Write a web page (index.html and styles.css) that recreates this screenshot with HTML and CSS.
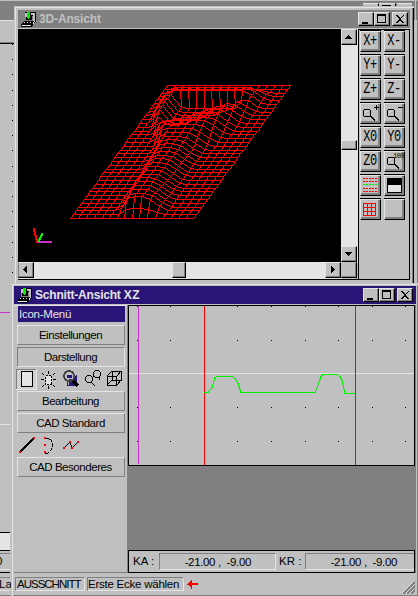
FILE: index.html
```html
<!DOCTYPE html>
<html lang="de">
<head>
<meta charset="utf-8">
<title>3D-Ansicht</title>
<link rel="stylesheet" href="styles.css">
</head>
<body>
<svg class="defs" width="0" height="0" aria-hidden="true">
  <defs>
    <g id="app">
      <path d="M5 1h11v9l-3 4-1 2H1v-3l4-4z" fill="#000"/>
      <path d="M5 2h10v8h-2V4h-2V2H7v4H5z" fill="#c0c0c0"/>
      <path d="M5 6h1v3h6V5h1v5H5z" fill="#808080"/>
      <path d="M7 1h3v6H9v1H8V7H7z" fill="#00f000"/>
      <path d="M2 14h9v1H2zM4 11h1v1H4zM7 11h1v1H7zM10 11h1v1h-1zM14 10h1v1h-1v2h-1v-2h1z" fill="#e4e4e4"/>
      <path d="M1 14h1v1H1z" fill="#f00"/>
    </g>
    <g id="lens" fill="none" stroke="#000">
      <circle cx="6" cy="9" r="4"/>
      <path d="M4 9l3-3" stroke="#e4e4e4"/>
      <path d="M9 11.500l5 5" stroke-width="1.600"/>
    </g>
    <g id="min"><path d="M3 9h6v2H3z"/></g>
    <g id="max"><path d="M2 1h9v9H2zM3 3v6h7V3z" fill-rule="evenodd"/></g>
    <g id="cls"><path d="M3 2h2v1h1v1h1v1h1V4h1V3h1V2h1v1h-1v1H9v1H8v2h1v1h1v1h1v1H9V9H8V8H6v1H5v1H3V9h1V8h1V7h1V5H5V4H4V3H3z"/></g>
  </defs>
</svg>

<div class="desktop">
  <div class="back">
    <div class="back-title"></div>
    <svg class="back-art" width="418" height="596" shape-rendering="crispEdges">
      <path d="M0 20.500h14" stroke="#e4e4e4"/>
      <path d="M0 43.500h14M0 532.500h10M0 550.500h10M0 572.500h10" stroke="#000"/>
      <path d="M0 42.500h14" stroke="#808080"/>
      <path d="M0 533h10v17H0z" fill="#e4e4e4"/>
      <path d="M0 553.500h10M0 577.500h10M0 595.500h12" stroke="#808080"/>
      <path d="M0 569.500h10M0 590.500h10M0 424.500h10" stroke="#e4e4e4"/>
      <path d="M0 312.500h10" stroke="#c832c8"/>
      <path d="M12.500 44v232" stroke="#000" stroke-dasharray="1 14.200"/>
      <path d="M363 3h15v4h-15zM379 3h16v4h-16zM397 3h15v4h-15z" fill="#c0c0c0"/>
      <path d="M363 3.500h14M379 3.500h15M397 3.500h15" stroke="#e4e4e4"/>
      <path d="M378.500 4v3M395.500 4v3M382 5.500h9" stroke="#000"/>
      <path d="M415.500 0v284" stroke="#c0c0c0"/>
      <path d="M417.500 0v284" stroke="#808080"/>
    </svg>
    <span class="back-num">0</span>
    <span class="back-lay">La</span>
  </div>

  <section class="win win3d">
    <header class="bar gray">
      <svg width="17" height="17" shape-rendering="crispEdges"><use href="#app"/></svg>
      <h1 class="t3d">3D-Ansicht</h1>
      <div class="caps">
        <button><svg width="13" height="12" shape-rendering="crispEdges"><use href="#min"/></svg></button>
        <button><svg width="13" height="12" shape-rendering="crispEdges"><use href="#max"/></svg></button>
        <button class="gap"><svg width="13" height="12" shape-rendering="crispEdges"><use href="#cls"/></svg></button>
      </div>
    </header>
    <div class="body3d">
      <div class="view">
        <canvas id="mesh" width="323" height="233"></canvas>
        <div class="vscroll">
          <i class="sb up"><svg width="13" height="13" shape-rendering="crispEdges"><path d="M6 5h1v1h1v1h1v1h1v1H3V8h1V7h1V6h1z"/></svg></i>
          <i class="sb vthumb"></i>
          <i class="sb down"><svg width="13" height="13" shape-rendering="crispEdges"><path d="M3 5h7v1H9v1H8v1H7v1H6V8H5V7H4V6H3z"/></svg></i>
        </div>
        <div class="hscroll">
          <i class="sb left"><svg width="13" height="13" shape-rendering="crispEdges"><path d="M8 3v7H7V9H6V8H5V7H4V6h1V5h1V4h1V3z"/></svg></i>
          <i class="sb hthumb"></i>
          <i class="sb right"><svg width="13" height="13" shape-rendering="crispEdges"><path d="M5 3h1v1h1v1h1v1h1v1H8v1H7v1H6v1H5z"/></svg></i>
        </div>
        <i class="sb corner"></i>
      </div>
      <div class="tools">
        <button><b>X+</b></button><button><b>X-</b></button>
        <button><b>Y+</b></button><button><b>Y-</b></button>
        <button><b>Z+</b></button><button><b>Z-</b></button>
        <button><svg width="19" height="19" shape-rendering="crispEdges"><use href="#lens"/><path d="M15.500 1v5M13 3.500h5" stroke="#000"/></svg></button>
        <button><svg width="19" height="19" shape-rendering="crispEdges"><use href="#lens"/><path d="M13 3.500h5" stroke="#000"/></svg></button>
        <button><b>X0</b></button><button><b>Y0</b></button>
        <button><b>Z0</b></button>
        <button class="hundred"><svg width="19" height="19" shape-rendering="crispEdges"><use href="#lens"/></svg><small>100</small></button>
        <button><svg width="19" height="19" shape-rendering="crispEdges"><path d="M2 2h2v1h-2zM5 2h2v1h-2zM8 2h2v1h-2zM11 2h2v1h-2zM14 2h2v1h-2zM2 5h2v1h-2zM5 5h2v1h-2zM8 5h2v1h-2zM11 5h2v1h-2zM14 5h2v1h-2zM2 12h2v1h-2zM5 12h2v1h-2zM8 12h2v1h-2zM11 12h2v1h-2zM14 12h2v1h-2zM2 15h2v1h-2zM5 15h2v1h-2zM8 15h2v1h-2zM11 15h2v1h-2zM14 15h2v1h-2z" fill="#f00"/><path d="M2 8h2v1h-2zM5 8h2v1h-2zM8 8h2v1h-2zM11 8h2v1h-2zM14 8h2v1h-2z" fill="#00f000"/></svg></button>
        <button><svg width="19" height="19" shape-rendering="crispEdges"><path d="M2 2h15v15H2z"/><path d="M3 9h13v7H3z" fill="#e4e4e4"/></svg></button>
        <button><svg width="19" height="19" shape-rendering="crispEdges"><path d="M2 3h13v1H2zM2 7h13v1H2zM2 11h13v1H2zM2 15h13v1H2zM2 3h1v13H2zM6 3h1v13H6zM10 3h1v13h-1zM14 3h1v13h-1z" fill="#f00"/></svg></button>
        <button></button>
      </div>
    </div>
  </section>

  <section class="win winxz">
    <header class="bar navy">
      <svg width="17" height="17" shape-rendering="crispEdges"><use href="#app"/></svg>
      <h1 class="txz">Schnitt-Ansicht <span>XZ</span></h1>
      <div class="caps">
        <button><svg width="13" height="12" shape-rendering="crispEdges"><use href="#min"/></svg></button>
        <button><svg width="13" height="12" shape-rendering="crispEdges"><use href="#max"/></svg></button>
        <button class="gap"><svg width="13" height="12" shape-rendering="crispEdges"><use href="#cls"/></svg></button>
      </div>
    </header>
    <div class="bodyxz">
      <nav class="menu">
        <div class="head">Icon-Menü</div>
        <button>Einstellungen</button>
        <button class="open">Darstellung</button>
        <div class="icons">
          <svg width="108" height="21" shape-rendering="crispEdges" fill="none" stroke="#000">
            <defs><pattern id="dither" width="2" height="2" patternUnits="userSpaceOnUse"><path d="M0 0h2v2H0z" fill="#c0c0c0" stroke="none"/><path d="M0 0h1v1H0zM1 1h1v1H1z" fill="#e4e4e4" stroke="none"/></pattern></defs>
            <path d="M0 0h21v21H0z" fill="url(#dither)" stroke="none"/>
            <path d="M0 .5h20M.5 0v20" stroke="#808080"/><path d="M0 20.500h21M20.500 0v21" stroke="#e4e4e4"/>
            <path d="M5.500 2.500h11v15h-11z" fill="#e4e4e4"/>
            <path d="M29.500 6.500h6v9h-6z" fill="#e4e4e4" stroke-dasharray="2 1"/>
            <path d="M32.500 2v3M32.500 17v3M25 10.500h3M37 10.500h3M26 4l2 2M39 4l-2 2M26 18l2-2M39 18l-2-2"/>
            <path d="M53 7h8v9h-8z" fill="#2a1478" stroke="none"/><path d="M60.500 6v10h-9v-3" stroke="#2a1478"/>
            <circle cx="53" cy="7" r="5" stroke-width="2" stroke="#444"/><path d="M50 5h6v4h-6z" fill="#2a1478" stroke="#c0c0c0"/><path d="M57 12l5 5" stroke-width="3"/>
            <circle cx="73" cy="10" r="3.500"/><circle cx="81" cy="5" r="3.500"/><path d="M75 13l4 4M83 8l1 3M77 8l2-1"/>
            <path d="M91.500 7.500h9v9h-9zM91 7l5-5h9l-4 5M101 16l4-5V2M96.500 2v9h9M91 16l5-5"/>
          </svg>
        </div>
        <button>Bearbeitung</button>
        <button>CAD Standard</button>
        <div class="icons cad">
          <svg width="108" height="21" shape-rendering="crispEdges" fill="none" stroke="#000">
            <path d="M4 17L18 3" stroke-width="1.500"/>
            <path d="M29 3h3l3 2 1 3v4l-1 3-3 3h-3" stroke-dasharray="4 1"/>
            <path d="M48 13l6-6 2 6 6-6"/>
            <path d="M3 16h2v2H3zM17 2h2v2h-2zM28 2h2v2h-2zM28 9h2v2h-2zM28 16h2v2h-2zM47 12h2v2h-2zM53 6h2v2h-2zM55 12h2v2h-2zM61 6h2v2h-2z" fill="#f00" stroke="none"/>
          </svg>
        </div>
        <button>CAD Besonderes</button>
      </nav>
      <div class="main">
        <svg class="plot" width="287" height="161" shape-rendering="crispEdges" fill="none">
          <path d="M.5 0v160.500h286V0M0 .5h287" stroke="#000"/>
          <g stroke="#000" stroke-width="1">
            <path d="M9.500 1v140" stroke-dasharray="1 32.700"/>
            <path d="M42.500 1v140" stroke-dasharray="1 32.700"/>
            <path d="M109.500 1v140" stroke-dasharray="1 32.700"/>
            <path d="M143.500 1v140" stroke-dasharray="1 32.700"/>
            <path d="M177.500 1v140" stroke-dasharray="1 32.700"/>
            <path d="M210.500 1v140" stroke-dasharray="1 32.700"/>
            <path d="M244.500 1v140" stroke-dasharray="1 32.700"/>
            <path d="M277.500 1v140" stroke-dasharray="1 32.700"/>
          </g>
          <path d="M1 68.500h285" stroke="#e4e4e4"/>
          <path d="M10.500 1v158" stroke="#c832c8"/>
          <path d="M76.500 1v159M227.500 1v159" stroke="#f00"/>
          <path d="M76 87.500h4l4-5 3-10 2-1h15l3 2 3 5 3 9h74l3-7 3-9 2-2h14l3 2 2 4 3 13h10" stroke="#00f000"/>
        </svg>
        <div class="coords">
          <label class="ka">KA :</label><output>-21.00 ,&nbsp; -9.00</output>
          <label class="kr">KR :</label><output class="o2">-21.00 ,&nbsp; -9.00</output>
        </div>
      </div>
    </div>
    <footer class="status">
      <span class="s1">AUSSCHNITT</span><span class="s2">Erste Ecke wählen</span>
      <svg class="arrow" width="11" height="9" shape-rendering="crispEdges"><path d="M0 4h1V3h1V2h1V1h1V0h1v3h6v2H5v4H4V7H3V6H2V5H0z" fill="#f00"/></svg>
      <svg class="grip" width="13" height="13" shape-rendering="crispEdges"><path d="M1 13L13 1M5 13l8-8M9 13l4-4" stroke="#808080" stroke-width="2"/><path d="M0 12L12 0M4 12l8-8M8 12l4-4" stroke="#e4e4e4"/></svg>
    </footer>
  </section>
</div>
<script src="mesh.js"></script>
</body>
</html>
```
FILE: styles.css
```css
* { box-sizing: border-box; }
body { margin: 0; background: #c0c0c0; font: 11.500px/14px "Liberation Sans", sans-serif; color: #000; overflow: hidden; }
svg, canvas { display: block; flex: none; }
.defs { position: absolute; }
button { appearance: none; border: 0; padding: 0; margin: 0; background: #c0c0c0; font: inherit; color: #000; border-radius: 0; }
.desktop { position: relative; width: 418px; height: 596px; overflow: hidden; }
.back { position: absolute; inset: 0; }
.back-title { height: 19px; margin-top: 1px; background: #808080; }
.back-art { position: absolute; left: 0; top: 0; }
.back-num { position: absolute; left: -4px; top: 554px; }
.back-lay { position: absolute; left: -1px; top: 577px; }

.win { position: absolute; background: #c0c0c0; display: flex; flex-direction: column; }
.win3d { left: 14px; top: 6px; width: 400px; height: 290px; padding: 4px 4px 0; box-shadow: inset 1px 1px #c0c0c0, inset 2px 2px #e4e4e4, inset -1px 0 #000, inset -2px 0 #808080; }
.winxz { left: 11px; top: 283px; width: 407px; height: 313px; padding: 3px 3px 0; box-shadow: inset 1px 1px #c0c0c0, inset 2px 2px #e4e4e4, inset -1px -1px #808080; }

.bar { display: flex; align-items: flex-start; height: 18px; flex: none; padding: 1px 2px 0; }
.gray { background: #808080; color: #c0c0c0; box-shadow: 0 1px #c0c0c0; }
.navy { background: #2a1478; color: #e4e4e4; margin-right: -1px; padding-right: 3px; }
.bar h1 { margin: 1px 0 0 2px; font-size: 12px; line-height: 14px; font-weight: bold; white-space: nowrap; }
.win3d .bar { width: 392px; }
.caps { display: flex; margin-left: auto; padding-top: 1px; }
.caps button { width: 16px; height: 14px; border: 1px solid; border-color: #e4e4e4 #000 #000 #e4e4e4; box-shadow: inset -1px -1px #808080; overflow: hidden; }
.caps .gap { margin-left: 2px; }
.t3d { letter-spacing: -.15px; }
.txz { letter-spacing: -.2px; }
.txz span { letter-spacing: .4px; }

.body3d { display: flex; width: 392px; height: 251px; margin-top: 1px; border-bottom: 1px solid #000; border-right: 1px solid #000; }
.view { display: grid; grid-template: 233px 17px / 323px 17px; flex: none; width: 341px; border-right: 1px solid #000; }
.view canvas { background: #000; }
.vscroll { display: flex; flex-direction: column; background: #e4e4e4; }
.hscroll { display: flex; background: #e4e4e4; }
.sb { display: block; flex: none; width: 16px; height: 16px; background: #c0c0c0; border: 1px solid; border-color: #e4e4e4 #000 #000 #e4e4e4; box-shadow: inset -1px -1px #808080; overflow: hidden; }
.vthumb { height: 10px; margin-top: 95px; }
.down { margin-top: auto; }
.hthumb { width: 14px; margin-left: 138px; }
.left { border-left-color: #808080; }
.right { margin-left: auto; }
.corner { border-color: #c0c0c0 #000 #000 #c0c0c0; }
.tools { display: grid; grid-template-columns: 21px 21px; grid-auto-rows: 21px; gap: 3px; align-content: start; padding: 2px 0 0 1px; flex: 1; box-shadow: inset 0 1px #000; }
.tools button { position: relative; width: 21px; height: 21px; border: 1px solid; border-color: #e4e4e4 #000 #000 #e4e4e4; box-shadow: inset -2px -2px #808080, 0 -1px #000; overflow: visible; }
.tools b { display: block; font: 12px/14px "Liberation Mono", monospace; letter-spacing: -.4px; transform: scaleY(1.350); margin: 0 0 1px -1px; }
.tools small { position: absolute; left: 8px; top: 1px; font: 7px/7px "Liberation Mono", monospace; letter-spacing: -.7px; }

.bodyxz { display: flex; height: 268px; margin-top: 1px; }
.menu { width: 113px; flex: none; padding: 1px 2px 0 3px; border: solid #808080; border-width: 0 0 1px; box-shadow: inset 0 1px #e4e4e4; display: flex; flex-direction: column; }
.head { height: 16px; margin: 0 0 3px 1px; padding: 1px 1px; background: #2a1478; color: #e4e4e4; letter-spacing: -.25px; }
.menu button { height: 20px; margin-bottom: 2px; width: 108px; border: 1px solid; border-color: #e4e4e4 #808080 #808080 #e4e4e4; padding-right: 1px; letter-spacing: -.45px; flex: none; }
.menu .open { border-color: #808080 #e4e4e4 #e4e4e4 #808080; }
.icons { height: 22px; margin-left: -1px; flex: none; }
.cad { margin: 0 0 1px; height: 21px; }
.cad svg { margin-left: -1px; }
.main { flex: 1; margin-right: -1px; background: #808080; display: flex; flex-direction: column; justify-content: space-between; padding-left: 1px; }
.plot { background: #c0c0c0; }
.coords { display: flex; width: 287px; height: 23px; border: 1px solid #000; background: #c0c0c0; padding-top: 2px; letter-spacing: -.35px; }
.coords label { width: 30px; padding: 1px 0 0 4px; white-space: nowrap; letter-spacing: 0; }
.coords output { width: 117px; height: 17px; padding: 1px 24px 0 0; border: 1px solid; border-color: #808080 #e4e4e4 #e4e4e4 #808080; text-align: right; white-space: nowrap; }
.coords .kr { width: 29px; padding-left: 3px; }
.coords .o2 { width: 109px; padding-right: 17px; border-right: 0; }
.status { display: flex; height: 22px; padding: 4px 0 0 1px; }
.status span { height: 14px; border: 1px solid; border-color: #808080 #e4e4e4 #e4e4e4 #808080; line-height: 13px; white-space: nowrap; padding-left: 1px; }
.status .s1 { width: 70px; letter-spacing: -1px; }
.status .s2 { width: 97px; margin-left: 2px; padding-left: 0; letter-spacing: -.24px; }
.arrow { margin: 3px 0 0 3px; }
.grip { margin: 4px 0 0 auto; }
```
FILE: mesh.js
```js
const canvas = document.getElementById('mesh');
const ctx = canvas.getContext('2d');
const COLS = 16, ROWS = 35, HEIGHT = 14;

// piecewise linear lookup
function lerp(table, t) {
  for (let i = 1; i < table.length; i++) {
    if (t <= table[i][0]) {
      const [a, p] = table[i - 1], [b, q] = table[i];
      return p + (q - p) * (t - a) / (b - a);
    }
  }
  return table[table.length - 1][1];
}
function step(a, b, t) {
  const k = Math.min(1, Math.max(0, (t - a) / (b - a)));
  return k * k * (3 - 2 * k);
}

const leftEdge = [[0, .36], [.2, .31], [.5, .28], [.6, .19], [.75, .04], [1, .03]];
const rightEdge = [[0, .77], [.25, .72], [.5, .70], [.66, .82], [.85, .92], [1, .95]];
const basinFront = [[0, .70], [.34, .70], [.72, .84], [1, .9]];

function height(u, v) {
  const l = lerp(leftEdge, v), r = lerp(rightEdge, v);
  const body = step(l, l + .12, u) * (1 - step(r - .18, r, u)) * step(0, .06, v) * (1 - step(.87, .98, v));
  const f = lerp(basinFront, u);
  const basin = step(.2, .26, u) * (1 - step(.72, .78, u)) * step(f - .07, f, v) * (1 - step(.83, .86, v));
  return HEIGHT * body * (1 - basin);
}
function project(i, j) {
  const u = i / COLS, v = j / ROWS, h = height(u, v);
  return [Math.round(52 + 123 * u + 97 * v - h * .25), Math.round(189 - 133 * v - h)];
}
function line(x0, y0, x1, y1) {
  const dx = Math.abs(x1 - x0), dy = Math.abs(y1 - y0);
  const n = Math.max(dx, dy, 1);
  for (let k = 0; k <= n; k++) {
    ctx.fillRect(Math.round(x0 + (x1 - x0) * k / n), Math.round(y0 + (y1 - y0) * k / n), 1, 1);
  }
}

ctx.fillStyle = '#f00';
for (let j = 0; j <= ROWS; j++) {
  for (let i = 0; i <= COLS; i++) {
    const p = project(i, j);
    if (i < COLS) line(...p, ...project(i + 1, j));
    if (j < ROWS) line(...p, ...project(i, j + 1));
  }
}

// axis tripod
function axis(color, x0, y0, x1, y1) {
  ctx.fillStyle = color;
  const n = Math.max(Math.abs(x1 - x0), Math.abs(y1 - y0));
  for (let k = 0; k <= n; k++) {
    ctx.fillRect(Math.round(x0 + (x1 - x0) * k / n), Math.round(y0 + (y1 - y0) * k / n), 2, 2);
  }
}
axis('#c832c8', 20, 212, 32, 212);
axis('#00f000', 20, 211, 23, 204);
axis('#ff0000', 18, 212, 15, 199);
```
